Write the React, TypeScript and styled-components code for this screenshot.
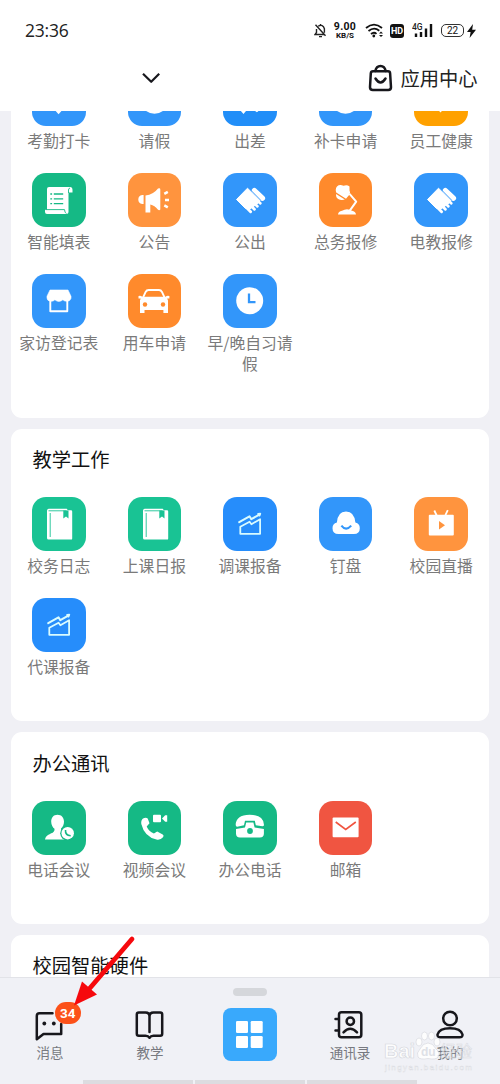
import React from 'react';
import styled, { createGlobalStyle } from 'styled-components';

const GlobalStyle = createGlobalStyle`
  * { box-sizing: border-box; }
  body {
    margin: 0;
    background: #f0f0f5;
    font-family: 'Noto Sans CJK SC', sans-serif;
  }
`;

const Screen = styled.div`
  position: relative;
  width: 500px;
  height: 1084px;
  display: flex;
  flex-direction: column;
  overflow: hidden;
  background: #f0f0f5;
`;

const StatusBar = styled.div`
  display: flex;
  align-items: center;
  justify-content: space-between;
  height: 61px;
  flex: none;
  padding: 0 24px 0 25px;
  background: #fff;
`;

const Clock = styled.span`
  padding-bottom: 1px;
  font: 400 17.5px 'Open Sans', sans-serif;
  letter-spacing: -0.2px;
  color: #222;
`;

const StatusIcons = styled.div`
  display: flex;
  align-items: center;
  color: #111;
`;

const Speed = styled.div`
  display: flex;
  flex-direction: column;
  align-items: center;
  width: 24px;
  margin: 0 8px 0 6px;
  font-family: Roboto, sans-serif;
  font-weight: 700;
`;

const SpeedValue = styled.span`
  font-size: 10.5px;
  line-height: 10px;
  letter-spacing: 0.3px;
`;

const SpeedUnit = styled.span`
  font-size: 8px;
  line-height: 8px;
`;

const HdBadge = styled.span`
  display: flex;
  align-items: center;
  justify-content: center;
  width: 14px;
  height: 14px;
  margin: 0 8px 0 6px;
  border-radius: 3px;
  background: #111;
  color: #fff;
  font: 700 9px Roboto, sans-serif;
`;

const Battery = styled.span`
  display: flex;
  align-items: center;
  justify-content: center;
  width: 23px;
  height: 13px;
  margin: 0 3px 0 8px;
  border: 1.5px solid #333;
  border-radius: 5px;
  font: 400 10px Roboto, sans-serif;
`;

const Header = styled.header`
  display: flex;
  align-items: center;
  justify-content: space-between;
  flex: none;
  height: 50px;
  padding: 0 22.5px 16px 141px;
  background: #fff;
`;

const AppCenter = styled.div`
  display: flex;
  align-items: center;
  gap: 7px;
  font-size: 19.3px;
  line-height: 28px;
  color: #222;
`;

const Content = styled.main`
  display: flex;
  flex-direction: column;
  flex: 1;
  min-height: 0;
  gap: 11px;
  padding: 0 11px;
  overflow: hidden;
`;

const Card = styled.section<{ $scrolled?: boolean }>`
  flex: none;
  margin-top: ${(p) => (p.$scrolled ? '-39px' : '0')};
  padding-bottom: 42.5px;
  border-radius: ${(p) => (p.$scrolled ? '0 0 11px 11px' : '11px')};
  background: #fff;
`;

const CardTitle = styled.h2`
  margin: 0;
  height: 68.4px;
  padding: 16.4px 0 0 21.5px;
  font-size: 19.3px;
  font-weight: 400;
  line-height: 28px;
  color: #111;
`;

const Grid = styled.div`
  display: grid;
  grid-template-columns: repeat(5, 1fr);
  row-gap: 20.5px;
`;

const AppItem = styled.div`
  display: flex;
  flex-direction: column;
  align-items: center;
`;

const Tile = styled.div<{ $color: string }>`
  width: 53.5px;
  height: 54px;
  border-radius: 14px;
  background: ${(p) => p.$color};
  overflow: hidden;
  svg { display: block; }
`;

const AppLabel = styled.span`
  width: 92px;
  margin: 4px 0 1.5px;
  font-size: 15.8px;
  line-height: 21px;
  text-align: center;
  color: #7a7a7a;
`;

const NavBar = styled.nav`
  display: flex;
  flex-direction: column;
  align-items: center;
  flex: none;
  height: 107px;
  padding-top: 10px;
  border-top: 1px solid #e2e3e8;
  background: #f0f1f6;
`;

const Handle = styled.div`
  width: 34px;
  height: 8px;
  border-radius: 4px;
  background: #d5d7db;
`;

const Tabs = styled.div`
  display: grid;
  grid-template-columns: repeat(5, 1fr);
  width: 500px;
  height: 84px;
  padding-top: 12px;
`;

const Tab = styled.div`
  position: relative;
  display: flex;
  flex-direction: column;
  align-items: center;
`;

const TabIcon = styled.div`
  height: 34px;
  padding-top: 2px;
  svg { display: block; }
`;

const TabLabel = styled.span`
  font-size: 13.5px;
  line-height: 20px;
  color: #777980;
`;

const UnreadBadge = styled.span`
  position: absolute;
  left: 54.5px;
  top: -6px;
  display: flex;
  align-items: center;
  justify-content: center;
  width: 26.5px;
  height: 22px;
  border-radius: 11px;
  background: #fc5119;
  color: #fff;
  font: 700 13.5px Roboto, sans-serif;
`;

const HomeButton = styled.div`
  width: 54px;
  height: 53px;
  border-radius: 8px;
  background: #39a9fc;
`;

const GestureBar = styled.div`
  display: grid;
  grid-template-columns: repeat(3, 1fr);
  gap: 2px;
  width: 334px;
  height: 4px;
`;

const GesturePart = styled.span`
  background: #dcdce0;
`;

const Pointer = styled.svg`
  position: absolute;
  left: 70px;
  top: 930px;
`;

const Watermark = styled.svg`
  position: absolute;
  left: 380px;
  top: 1026px;
`;

const W = '#fff';
const BLUE = '#3296fa';
const GREEN = '#15b985';
const MINT = '#19c394';
const ORANGE = '#ff943e';
const DEEP_ORANGE = '#ff8a2c';

const HandGlyph = (
  <g>
    <path d="M13.5 26.5 24.5 15.2 37 27.6 34 31 26 36.5 22 35Z" fill={W} stroke={W} strokeWidth="1" strokeLinejoin="round" />
    <path d="M21.5 32.5 27.6 38.7M25 30 31.4 36.3M28 27 34.3 33.2M31 24.5 37.2 30.3" stroke={W} strokeWidth="2.9" strokeLinecap="round" />
    <path d="M31.4 17.6 39.4 25.2" stroke={W} strokeWidth="5.4" strokeLinecap="round" />
    <path d="m27.8 17 10.2 10.4" stroke={BLUE} strokeWidth=".7" />
  </g>
);

const BookGlyph = (
  <g>
    <path d="M17 11.7h17.5q1 0 1 1.5H39q1.2 0 1.2 1.2v27q0 1.2-1.2 1.2H16.5q-1.5 0-1.5-1.5V13.7q0-2 2-2Z" fill={W} />
    <path d="M16.5 13.8h18M18.2 16v24" stroke={MINT} strokeWidth=".9" />
    <path d="M31.3 13.5h5.2v8L34 19.5l-2.7 2Z" fill={MINT} />
  </g>
);

const ChartGlyph = (
  <g fill="none" stroke="#d8fbff" strokeWidth="2" strokeLinejoin="round" strokeLinecap="round">
    <path d="m16.2 25.2 10.3-5.9 1.8 2.9 8-4.6" />
    <path d="m35.2 16.9 2-.2-.8 1.8" />
    <path d="m17.3 29.8 9.3-5 1.8 2.4 8.7-5v14.6H17.3Z" strokeWidth="1.8" />
  </g>
);

const glyphs: Record<string, React.ReactNode> = {
  pin: <path d="M20 35h13L26.6 42.2Z" fill={W} />,
  disc: <circle cx="26.5" cy="27.5" r="14.2" fill={W} />,
  trip: <path d="M18 34h5v5l-2.5 3L17 38ZM31 34h5v4.5l-2 1.8-3-2Z" fill={W} />,
  heart: <path d="M14 27h25L26.5 40.5Z" fill={W} />,
  form: (
    <g>
      <path d="M15 16q0-2 2-2h21q2.5 0 2.5 3v2.4h-4V39q0 2-2 2H15q-2 0-2-2v-2.2h2Z" fill={W} />
      <path d="M13.5 36.6h19q.3 3.5 2 4M36.5 20v-3q0-1.7 1.5-2" stroke={GREEN} strokeWidth=".9" fill="none" />
      <path d="M18.3 21h1.8M21.8 21h9.4M18.3 25.8h1.8M21.8 25.8h9.4M18.3 30.7h1.8M21.8 30.7h9.4" stroke={GREEN} strokeWidth="1.3" />
    </g>
  ),
  horn: (
    <g>
      <path d="M15.6 22v9h-1.4q-3.9-.6-3.9-4.5t3.9-4.5ZM17.5 22.5q8-1 12.5-7 2.3-1 2.3 1v20q-1 1.4-2.5 0-3-4-7.5-5v8h-4.8Z" fill={W} />
      <path d="m36.3 20.8 3.5-2M37 27h4M36.3 32.4l3.5 2" stroke={W} strokeWidth="2.5" />
    </g>
  ),
  hand: HandGlyph,
  lamp: (
    <g>
      <path d="M17.2 19.6Q16 15.8 18 13.5q2.5-2.5 6.5-.7 3.5-1.5 6 .7v4q1 1.8.2 3.7L27 25.8Z" fill={W} />
      <path d="M17 21q-.4 4.7 4 5.8 3.3.5 4.8-.3Z" fill={W} />
      <path d="m30.5 20.8 6.7 7.8-6.6 9.2" fill="none" stroke={W} strokeWidth="2" strokeLinejoin="round" />
      <path d="M19 41.5q.3-3 4-3.7 5-3.3 10 0 3.5.7 4 3.7Z" fill={W} />
    </g>
  ),
  shop: (
    <g>
      <path d="M18 16h18l3 6.3v2q-1 3-3.7 3-3 0-4.4-1.5-2 1.6-4 1.6t-4-1.6q-1.5 1.5-4 1.5Q15 27 15 24v-1.8Z" fill={W} stroke={W} strokeWidth=".6" strokeLinejoin="round" />
      <path d="M18.3 26.5v10.7h17V26.5" fill="none" stroke={W} strokeWidth="1.9" strokeLinejoin="round" />
    </g>
  ),
  car: (
    <g>
      <path d="m14.8 24 2.8-6q1-2 3-2H31q2 0 3 2l2.8 6" fill="none" stroke={W} strokeWidth="1.8" />
      <path d="M10.5 22q2-1 3.7.8h23.4q1.5-1.8 3.8-.8v2.5h-2.2l.8 2V39h-4.6v-3H16.5v3H12V26.5l.7-2h-2.2Z" fill={W} />
      <circle cx="17" cy="30.5" r="2.2" fill={DEEP_ORANGE} />
      <circle cx="35" cy="30.5" r="2.2" fill={DEEP_ORANGE} />
    </g>
  ),
  clock: (
    <g>
      <circle cx="26.7" cy="26.7" r="13.5" fill={W} />
      <path d="M26 19.5v8.7h6.5" fill="none" stroke={BLUE} strokeWidth="2.3" />
    </g>
  ),
  book: BookGlyph,
  chart: ChartGlyph,
  cloud: (
    <g>
      <path d="M19.5 37q-6 0-6-5.8 0-4.4 4.4-5.6Q18.6 14.4 27 14.4t9.4 11.2q4.4 1.2 4.4 5.6 0 5.8-6 5.8Z" fill={W} />
      <path d="M22.4 28.6q4.6 6 9.8 0" fill="none" stroke={BLUE} strokeWidth="2.1" />
    </g>
  ),
  tv: (
    <g>
      <rect x="14.8" y="17.8" width="25" height="20.8" rx="1" fill={W} />
      <path d="m20.3 13.5 2.4 5M33.8 13.2l-2.4 5" stroke={W} strokeWidth="1.8" />
      <path d="m25 24 6 4.2-6 4.3Z" fill={ORANGE} />
    </g>
  ),
  meeting: (
    <g>
      <path d="M25.5 13.8c-4 0-6.3 2.8-6.3 7 0 3.3 1.7 6 3.3 7 .2 2.8-1 3.8-4.5 5.1Q13.5 34.6 13 38.6h22V31l-5.5-2c-.7-.4-.7-.7-.5-1.4 1.7-1.4 3-4 3-6.8 0-4.2-2.5-7-6.5-7Z" fill={W} />
      <circle cx="35.7" cy="32.2" r="7.5" fill={GREEN} />
      <circle cx="35.7" cy="32.2" r="6.2" fill={W} />
      <path d="M33.5 29q-.4 5.3 5.2 5.8" fill="none" stroke={GREEN} strokeWidth="1.6" />
    </g>
  ),
  video: (
    <g>
      <path d="M15 17.5q3-1.7 4.7 0l1.8 4.8-2.8 3.3q2 4.8 7.2 7l3.3-2 5.5 3q1.7 1 .3 2.7-2.5 3-6.5 2.2Q16.5 36 13.3 23q-.5-4 1.7-5.5Z" fill={W} />
      <rect x="25" y="13.7" width="8" height="7.5" rx="1" fill={W} />
      <path d="m34 17.4 3.2-3.2h2v6.5h-2Z" fill={W} />
    </g>
  ),
  phone: (
    <g>
      <path d="M12.7 24q0-9.8 14-10.2 14 0 14.3 10.2-.1 1.3-1.6 1.3l-6.6-1-1-4.6H22l-1 4.6-6.8 1.4q-1.5 0-1.5-1.7Z" fill={W} />
      <path d="m13 28 9-1.6 1.2-5h7.2l1.2 5 9.3 1.6v4.5q0 4-4 4H17q-4 0-4-4Z" fill={W} />
      <circle cx="27" cy="30" r="2.9" fill={GREEN} />
    </g>
  ),
  mail: (
    <g>
      <rect x="13.6" y="16.6" width="26" height="19.6" rx="1" fill={W} />
      <path d="m16.7 21 10 7.5L36.8 21" fill="none" stroke="#f05541" strokeWidth="1.6" />
    </g>
  ),
};

type App = [label: string, glyph: string, color: string];

const sections: { title?: string; apps: App[] }[] = [
  {
    apps: [
      ['考勤打卡', 'pin', BLUE],
      ['请假', 'disc', BLUE],
      ['出差', 'trip', '#218ef8'],
      ['补卡申请', 'disc', BLUE],
      ['员工健康', 'heart', '#ffa100'],
      ['智能填表', 'form', GREEN],
      ['公告', 'horn', ORANGE],
      ['公出', 'hand', BLUE],
      ['总务报修', 'lamp', DEEP_ORANGE],
      ['电教报修', 'hand', BLUE],
      ['家访登记表', 'shop', BLUE],
      ['用车申请', 'car', DEEP_ORANGE],
      ['早/晚自习请假', 'clock', BLUE],
    ],
  },
  {
    title: '教学工作',
    apps: [
      ['校务日志', 'book', MINT],
      ['上课日报', 'book', MINT],
      ['调课报备', 'chart', '#268dfb'],
      ['钉盘', 'cloud', BLUE],
      ['校园直播', 'tv', ORANGE],
      ['代课报备', 'chart', '#268dfb'],
    ],
  },
  {
    title: '办公通讯',
    apps: [
      ['电话会议', 'meeting', GREEN],
      ['视频会议', 'video', GREEN],
      ['办公电话', 'phone', GREEN],
      ['邮箱', 'mail', '#f05541'],
    ],
  },
  { title: '校园智能硬件', apps: [] },
];

const line = {
  fill: 'none',
  stroke: '#17171c',
  strokeWidth: 2.5,
  strokeLinecap: 'round' as const,
  strokeLinejoin: 'round' as const,
};

export default function App() {
  return (
    <Screen>
      <GlobalStyle />
      <StatusBar>
        <Clock>23:36</Clock>
        <StatusIcons>
          <svg width="13" height="15" viewBox="0 0 13 15" fill="none" stroke="#222" strokeWidth="1.4">
            <path d="M4.2 3.2q4.8-2.4 6.2 2.5v4M2.5 6v3.5L1 11.5h9M5 13.6h3M1.5 1.8l10 11" />
            <path d="M6.5 1v1" />
          </svg>
          <Speed>
            <SpeedValue>9.00</SpeedValue>
            <SpeedUnit>KB/S</SpeedUnit>
          </Speed>
          <svg width="19" height="15" viewBox="0 0 19 15" fill="none" stroke="#111" strokeWidth="1.8">
            <path d="M1 5Q9 -1.8 17 5M3.5 8Q9 3.5 14.3 7.7M6 11q3-2.5 5.5-.2" />
            <circle cx="8.8" cy="13" r="1.4" fill="#111" stroke="none" />
            <path d="m14 10.5 2-2 2 2ZM14 12l2 2 2-2Z" fill="#111" stroke="none" />
          </svg>
          <HdBadge>HD</HdBadge>
          <svg width="21" height="15" viewBox="0 0 21 15">
            <text x="0" y="7" fontFamily="Roboto" fontSize="8.5" fontWeight="500" fill="#222">4G</text>
            <path d="M4 10.5V14M9 9v5M14 5.5V14M19 1v13" stroke="#111" strokeWidth="2.4" />
          </svg>
          <Battery>22</Battery>
          <svg width="9" height="14" viewBox="0 0 9 14">
            <path d="M6 0 0 8h3.6L2.6 14 9 5.7H5.2Z" fill="#111" />
          </svg>
        </StatusIcons>
      </StatusBar>

      <Header>
        <svg width="20" height="12" viewBox="0 0 20 12">
          <path d="m2 1.8 8.2 8 8-8" {...line} strokeWidth={2.2} strokeLinecap="butt" />
        </svg>
        <AppCenter>
          <svg width="25" height="28" viewBox="0 0 25 28">
            <path d="M5 7.3h15q2 0 2.1 2l.9 14q0 2.7-2.7 2.7H4.8Q2 26 2 23.3l.8-14q.2-2 2.2-2Z" {...line} />
            <path d="M7.3 7q1-5 5.2-5t5.2 5M7.5 14.5q5 8 10 0" {...line} />
          </svg>
          应用中心
        </AppCenter>
      </Header>

      <Content>
        {sections.map((section, i) => (
          <Card key={i} $scrolled={!section.title}>
            {section.title && <CardTitle>{section.title}</CardTitle>}
            <Grid>
              {section.apps.map(([label, glyph, color]) => (
                <AppItem key={label}>
                  <Tile $color={color}>
                    <svg width="54" height="54" viewBox="0 0 54 54">{glyphs[glyph]}</svg>
                  </Tile>
                  <AppLabel>{label}</AppLabel>
                </AppItem>
              ))}
            </Grid>
          </Card>
        ))}
      </Content>

      <NavBar>
        <Handle />
        <Tabs>
          <Tab>
            <TabIcon>
              <svg width="30" height="32" viewBox="1 0 30 32">
                <path d="M27.2 14v10H9.5L2.8 29.3V6q0-2.7 2.7-2.7h13" {...line} />
                <circle cx="10.3" cy="13.5" r="1.9" fill="#17171c" />
                <circle cx="19.8" cy="13.5" r="1.9" fill="#17171c" />
              </svg>
            </TabIcon>
            <TabLabel>消息</TabLabel>
            <UnreadBadge>34</UnreadBadge>
          </Tab>
          <Tab>
            <TabIcon>
              <svg width="30" height="32" viewBox="0.5 0 30 32">
                <path d="M15 27.8q-1.2-2-4-2H4.3q-2 0-2-2V4.5q0-2 2-2H11q4 0 4 4 0-4 4-4h6.7q2 0 2 2v19.3q0 2-2 2H19q-2.8 0-4 2ZM15 6.5V22" {...line} />
              </svg>
            </TabIcon>
            <TabLabel>教学</TabLabel>
          </Tab>
          <Tab>
            <HomeButton>
              <svg width="53" height="53" viewBox="0 0 53 53" fill={W}>
                <rect x="13" y="13" width="12" height="12" rx="1.3" />
                <rect x="27.7" y="13" width="12" height="12" rx="1.3" />
                <rect x="13" y="28" width="12" height="12" rx="1.3" />
                <rect x="27.7" y="28" width="12" height="12" rx="1.3" />
              </svg>
            </HomeButton>
          </Tab>
          <Tab>
            <TabIcon>
              <svg width="32" height="32" viewBox="0 0 32 32">
                <rect x="5" y="2.3" width="22.3" height="25" rx="2.5" {...line} />
                <path d="M1.5 9H4M1.5 20.5H4M9.5 22.3q6.7-7 13.5 0" {...line} />
                <circle cx="16.3" cy="11.3" r="3.7" {...line} />
              </svg>
            </TabIcon>
            <TabLabel>通讯录</TabLabel>
          </Tab>
          <Tab>
            <TabIcon>
              <svg width="30" height="32" viewBox="0 0 30 32">
                <circle cx="15" cy="8.5" r="6.8" {...line} />
                <path d="M2.5 24.5q1.8-6.3 12.5-6.3t12.5 6.3q.3 2.8-3 2.8h-19q-3.3 0-3-2.8Z" {...line} />
              </svg>
            </TabIcon>
            <TabLabel>我的</TabLabel>
          </Tab>
        </Tabs>
        <GestureBar>
          <GesturePart />
          <GesturePart />
          <GesturePart />
        </GestureBar>
      </NavBar>

      <Pointer width="70" height="80" viewBox="0 0 70 80">
        <path d="M62 9 20 58" stroke="#f6090d" strokeWidth="4.8" strokeLinecap="round" />
        <path d="M4 75.5 12 51.5 27 64.5Z" fill="#f6090d" />
      </Pointer>

      <Watermark width="100" height="50" viewBox="0 0 100 50">
        <g fill="#fff" stroke="#d0d2d8" strokeWidth=".6" opacity=".88" fontFamily="Liberation Sans" fontWeight="700">
          <text x="4" y="32" fontSize="20" textLength="31" lengthAdjust="spacingAndGlyphs">Bai</text>
          <ellipse cx="39" cy="16" rx="3" ry="4" />
          <ellipse cx="44.5" cy="10" rx="3" ry="4" />
          <ellipse cx="51.5" cy="10" rx="3" ry="4" />
          <ellipse cx="57" cy="16" rx="3" ry="4" />
          <path d="M48 17q5 0 8 6 5 4 2 8-2 3-10 1.5Q40 34 38 31q-2-4 2-8 3-6 8-6Z" />
          <text x="41" y="30" fontSize="12" fill="#dcdee4" stroke="none">du</text>
          <text x="60" y="31" fontSize="16" fontFamily="Noto Sans CJK SC" fontWeight="400" opacity=".75">经验</text>
          <text x="5" y="44" fontSize="8" fontWeight="400" textLength="87" stroke="#d8dae0" strokeWidth=".4">jingyan.baidu.com</text>
        </g>
      </Watermark>
    </Screen>
  );
}
